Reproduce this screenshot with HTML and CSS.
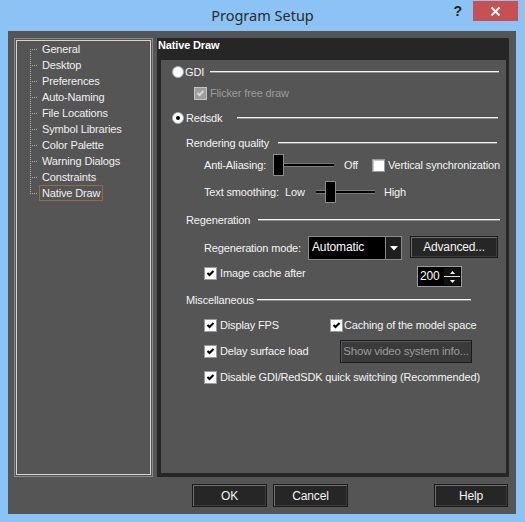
FILE: index.html
```html
<!DOCTYPE html>
<html>
<head>
<meta charset="utf-8">
<title>Program Setup</title>
<link rel="stylesheet" href="styles.css">
</head>
<body>
<div class="window">
  <div class="titlebar">
    <div></div>
    <div class="title">Program Setup</div>
    <div class="controls">
      <span class="help-q">?</span>
      <span class="close"><svg width="11" height="11" viewBox="0 0 11 11"><path d="M1.5 1.5 L9.5 9.5 M9.5 1.5 L1.5 9.5" stroke="#fff" stroke-width="2" fill="none"/></svg></span>
    </div>
  </div>
  <div class="client">
    <div class="main">
      <div class="tree">
        <ul class="tree-list">
          <li class="tree-item first"><span class="conn"></span><span class="tlabel">General</span></li>
          <li class="tree-item"><span class="conn"></span><span class="tlabel">Desktop</span></li>
          <li class="tree-item"><span class="conn"></span><span class="tlabel">Preferences</span></li>
          <li class="tree-item"><span class="conn"></span><span class="tlabel">Auto-Naming</span></li>
          <li class="tree-item"><span class="conn"></span><span class="tlabel">File Locations</span></li>
          <li class="tree-item"><span class="conn"></span><span class="tlabel">Symbol Libraries</span></li>
          <li class="tree-item"><span class="conn"></span><span class="tlabel">Color Palette</span></li>
          <li class="tree-item"><span class="conn"></span><span class="tlabel">Warning Dialogs</span></li>
          <li class="tree-item"><span class="conn"></span><span class="tlabel">Constraints</span></li>
          <li class="tree-item last"><span class="conn"></span><span class="tlabel selected">Native Draw</span></li>
        </ul>
      </div>
      <div class="page">
        <div class="page-title">Native Draw</div>
        <div class="page-body">
          <div class="row r-gdi">
            <span class="radio"></span>
            <span class="lbl w-gdi">GDI</span>
            <span class="sep m7"></span>
          </div>
          <div class="row r-flicker">
            <span class="cb disabled"><svg width="11" height="11" viewBox="0 0 11 11"><path d="M2.5 5 L4.5 7 L8.5 3" stroke="#d8d8d8" stroke-width="2" fill="none"/></svg></span>
            <span class="lbl dim ml3">Flicker free draw</span>
          </div>
          <div class="row r-red">
            <span class="radio on"></span>
            <span class="lbl w-red">Redsdk</span>
            <span class="sep m8"></span>
          </div>
          <div class="row r-head h22">
            <span class="lbl w-rq">Rendering quality</span>
            <span class="sep m9"></span>
          </div>
          <div class="row r-ind h22">
            <span class="lbl w-aa">Anti-Aliasing:</span>
            <span class="slider">
              <span class="thumb"></span>
              <span class="track w50"></span>
            </span>
            <span class="lbl w-off">Off</span>
            <span class="cb"></span>
            <span class="lbl ml3">Vertical synchronization</span>
          </div>
          <div class="row r-ind h32">
            <span class="lbl w-ts">Text smoothing:</span>
            <span class="lbl w-low">Low</span>
            <span class="slider">
              <span class="track w9"></span>
              <span class="thumb"></span>
              <span class="track w39"></span>
            </span>
            <span class="lbl ml9">High</span>
          </div>
          <div class="row r-head h24">
            <span class="lbl w-regen">Regeneration</span>
            <span class="sep m6"></span>
          </div>
          <div class="row r-ind h32">
            <span class="lbl w-mode">Regeneration mode:</span>
            <span class="combo">
              <span class="combo-text">Automatic</span>
              <span class="combo-btn"><svg width="8" height="5" viewBox="0 0 8 5"><path d="M0 0 H8 L4 4.5 Z" fill="#fff"/></svg></span>
            </span>
            <span class="btn adv">Advanced...</span>
          </div>
          <div class="row r-ind h18">
            <span class="cb checked"><svg width="11" height="11" viewBox="0 0 11 11"><path d="M2.5 5 L4.5 7 L8.5 3" stroke="#000" stroke-width="2" fill="none"/></svg></span>
            <span class="lbl ml3 w-cache">Image cache after</span>
            <span class="spin">
              <span class="spin-val">200</span>
              <span class="spin-btns">
                <span class="spin-up"><svg width="5" height="3" viewBox="0 0 5 3"><path d="M0 3 H5 L2.5 0 Z" fill="#fff"/></svg></span>
                <span class="spin-down"><svg width="5" height="3" viewBox="0 0 5 3"><path d="M0 0 H5 L2.5 3 Z" fill="#fff"/></svg></span>
              </span>
            </span>
          </div>
          <div class="row r-head h36">
            <span class="lbl w-misc">Miscellaneous</span>
            <span class="sep m35"></span>
          </div>
          <div class="row r-ind h14">
            <span class="cb checked"><svg width="11" height="11" viewBox="0 0 11 11"><path d="M2.5 5 L4.5 7 L8.5 3" stroke="#000" stroke-width="2" fill="none"/></svg></span>
            <span class="lbl ml3 w-fps">Display FPS</span>
            <span class="cb checked"><svg width="11" height="11" viewBox="0 0 11 11"><path d="M2.5 5 L4.5 7 L8.5 3" stroke="#000" stroke-width="2" fill="none"/></svg></span>
            <span class="lbl ml1">Caching of the model space</span>
          </div>
          <div class="row r-ind h38">
            <span class="cb checked"><svg width="11" height="11" viewBox="0 0 11 11"><path d="M2.5 5 L4.5 7 L8.5 3" stroke="#000" stroke-width="2" fill="none"/></svg></span>
            <span class="lbl ml3 w-delay">Delay surface load</span>
            <span class="btn vid">Show video system info...</span>
          </div>
          <div class="row r-ind h14">
            <span class="cb checked"><svg width="11" height="11" viewBox="0 0 11 11"><path d="M2.5 5 L4.5 7 L8.5 3" stroke="#000" stroke-width="2" fill="none"/></svg></span>
            <span class="lbl ml3">Disable GDI/RedSDK quick switching (Recommended)</span>
          </div>
        </div>
      </div>
    </div>
    <div class="buttons">
      <span class="btn dlg">OK</span>
      <span class="btn dlg">Cancel</span>
      <span class="btn dlg help">Help</span>
    </div>
  </div>
</div>
</body>
</html>
```
FILE: styles.css
```css
* { box-sizing: border-box; }
html, body { margin: 0; padding: 0; }
body {
  width: 525px;
  height: 522px;
  overflow: hidden;
  font-family: "Liberation Sans", Arial, sans-serif;
  font-size: 11px;
  letter-spacing: -0.15px;
  color: #f2f2f2;
}
.window {
  width: 525px;
  height: 522px;
  background: #8bc4f4;
  display: flex;
  flex-direction: column;
}
.titlebar {
  height: 31px;
  display: grid;
  grid-template-columns: 1fr auto 1fr;
}
.title {
  font-family: "Noto Sans", "Open Sans", sans-serif;
  font-size: 14.5px;
  letter-spacing: 0;
  color: #2b2b2b;
  line-height: 31px;
  padding-bottom: 1px;
}
.controls {
  display: flex;
  justify-content: flex-end;
  align-items: flex-start;
}
.help-q {
  font-family: "Liberation Sans", sans-serif;
  font-weight: bold;
  font-size: 14px;
  color: #222;
  margin-top: 4px;
  margin-right: 11px;
  line-height: 14px;
}
.close {
  width: 45px;
  height: 20px;
  margin-top: 1px;
  margin-right: 7px;
  background: #c75050;
  display: flex;
  align-items: center;
  justify-content: center;
}
.client {
  margin: 0 9px 8px 8px;
  width: 508px;
  height: 483px;
  background: #555555;
  padding: 7px 7px 0 6px;
  display: flex;
  flex-direction: column;
}
.main {
  display: flex;
  gap: 4px;
  height: 439px;
}
.tree {
  width: 139px;
  height: 439px;
  border: 1px solid #8a8a8a;
  box-shadow: inset 0 0 0 1px #555, inset 0 0 0 2px #d4d4d4;
  padding: 2px 0 0 15px;
}
.tree-list {
  list-style: none;
  margin: 0;
  padding: 0;
}
.tree-item {
  display: flex;
  align-items: center;
  height: 16px;
}
.conn {
  width: 9px;
  height: 16px;
  flex: none;
  background-image:
    repeating-linear-gradient(to right, #b0b0b0 0 1px, transparent 1px 2px),
    repeating-linear-gradient(to bottom, #b0b0b0 0 1px, transparent 1px 2px);
  background-repeat: no-repeat;
  background-size: 8px 1px, 1px 16px;
  background-position: 0 8px, 0 0;
}
.tree-item.first .conn {
  background-size: 8px 1px, 1px 8px;
  background-position: 0 8px, 0 8px;
}
.tree-item.last .conn {
  background-size: 8px 1px, 1px 9px;
  background-position: 0 8px, 0 0;
}
.tlabel {
  border: 1px solid transparent;
  padding: 0 2px;
  line-height: 14px;
  color: #f0f0f0;
}
.tlabel.selected {
  border-color: #9a6a3c;
}
.page {
  width: 352px;
  height: 439px;
  background: #262626;
  display: flex;
  flex-direction: column;
}
.page-title {
  height: 22px;
  padding-left: 1px;
  font-weight: bold;
  line-height: 15px;
  color: #fff;
}
.page-body {
  flex: 1;
  margin: 0 3px 4px 4px;
  background: #555555;
  padding-top: 2px;
}
.row {
  display: flex;
  align-items: center;
  white-space: nowrap;
}
.r-gdi { height: 20px; padding-left: 11px; }
.r-flicker { height: 22px; padding-left: 33px; }
.r-red { height: 28px; padding-left: 11px; }
.r-head { padding-left: 25px; }
.r-ind { padding-left: 43px; }
.h14 { height: 14px; }
.h18 { height: 18px; }
.h22 { height: 22px; }
.h24 { height: 24px; }
.h32 { height: 32px; }
.h36 { height: 36px; }
.h38 { height: 38px; }
.lbl { flex: none; color: #f4f4f4; }
.lbl.dim { color: #9c9c9c; }
.ml1 { margin-left: 1px; }
.ml3 { margin-left: 3px; }
.ml9 { margin-left: 9px; }
.w-gdi { width: 25px; margin-left: 1px; }
.w-red { width: 51px; margin-left: 2px; }
.w-rq { width: 92px; }
.w-regen { width: 72px; }
.w-misc { width: 71px; }
.w-aa { width: 69px; }
.w-off { width: 28px; margin-left: 10px; }
.w-ts { width: 81px; }
.w-low { width: 31px; }
.w-mode { width: 104px; }
.w-cache { width: 197px; }
.w-fps { width: 110px; }
.w-delay { width: 120px; }
.sep {
  flex: 1;
  height: 2px;
  border-top: 1px solid #f4f4f4;
  border-bottom: 1px solid #8c8c8c;
}
.m6 { margin-right: 6px; }
.m7 { margin-right: 7px; }
.m8 { margin-right: 8px; }
.m9 { margin-right: 9px; }
.m35 { margin-right: 35px; }
.radio {
  width: 12px;
  height: 12px;
  flex: none;
  border-radius: 50%;
  background: #fff;
  border: 1px solid #a8a8a8;
  display: flex;
  align-items: center;
  justify-content: center;
}
.radio.on::after {
  content: "";
  width: 4px;
  height: 4px;
  border-radius: 50%;
  background: #000;
}
.cb {
  width: 13px;
  height: 13px;
  flex: none;
  background: #fff;
  border: 1px solid #9a9a9a;
  box-shadow: inset 1px 1px 0 #c8c8c8;
  display: flex;
  align-items: center;
  justify-content: center;
}
.cb.checked { box-shadow: none; }
.cb.disabled {
  background: #9d9d9d;
  border-color: #c4c4c4;
  box-shadow: none;
}
.slider {
  display: flex;
  align-items: center;
  flex: none;
}
.thumb {
  width: 11px;
  height: 22px;
  background: #000;
  border: 1px solid #8c8c8c;
}
.track {
  height: 2px;
  background: #000;
  box-shadow: 0 1px 0 #7a7a7a, 0 -1px 0 #7a7a7a;
}
.w9 { width: 9px; }
.w39 { width: 39px; }
.w50 { width: 50px; }
.combo {
  display: flex;
  height: 24px;
  flex: none;
}
.combo-text {
  width: 78px;
  height: 24px;
  background: #000;
  border: 1px solid #8a8a8a;
  padding-left: 3px;
  line-height: 20px;
  font-size: 12px;
  color: #fff;
}
.combo-btn {
  width: 16px;
  height: 24px;
  background: #1e1e1e;
  border: 1px solid #8a8a8a;
  border-left: none;
  display: flex;
  align-items: center;
  justify-content: center;
}
.btn {
  display: flex;
  align-items: center;
  justify-content: center;
  background: #262626;
  border: 1px solid #1a1a1a;
  box-shadow: inset 1px 1px 0 #6e6e6e, inset -1px -1px 0 #3c3c3c;
  color: #f4f4f4;
  flex: none;
}
.adv {
  width: 88px;
  height: 22px;
  margin-left: 8px;
  margin-top: -2px;
  font-size: 12px;
}
.vid {
  width: 132px;
  height: 23px;
  background: #3a3a3a;
  color: #9a9a9a;
  font-size: 11.5px;
  letter-spacing: -0.2px;
  box-shadow: inset 1px 1px 0 #5a5a5a;
}
.spin {
  display: flex;
  width: 45px;
  height: 21px;
  align-self: flex-start;
  margin-top: 2px;
  background: #000;
  border: 1px solid #9a9a9a;
  flex: none;
}
.spin-val {
  flex: 1;
  padding-left: 2px;
  line-height: 19px;
  font-size: 12px;
  color: #fff;
}
.spin-btns {
  width: 16px;
  display: flex;
  flex-direction: column;
  margin: 1px 1px 1px 0;
}
.spin-up, .spin-down {
  flex: 1;
  display: flex;
  align-items: center;
  justify-content: center;
  background: #111;
}
.spin-down { border-top: 1px solid #e0e0e0; }
.buttons {
  display: flex;
  height: 23px;
  margin-top: 7px;
  padding-left: 178px;
  gap: 6px;
}
.dlg {
  width: 75px;
  height: 23px;
  font-size: 12px;
}
.help {
  margin-left: auto;
  margin-right: 1px;
  width: 74px;
}
```
